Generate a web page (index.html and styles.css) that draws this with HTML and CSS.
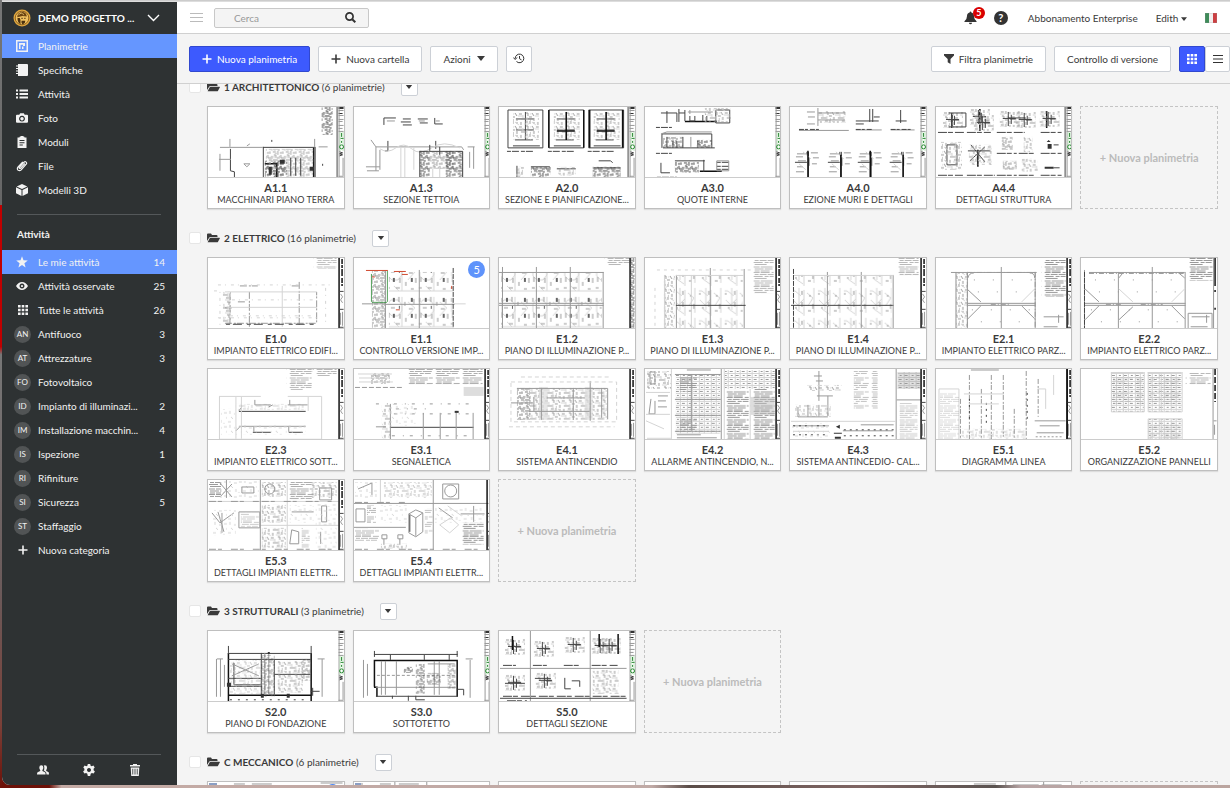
FILE: index.html
```html
<!DOCTYPE html>
<html lang="it">
<head>
    <title>Planimetrie</title>
    <meta charset="utf-8">

    <link rel="stylesheet" href="styles.css">

</head>
<body>

<!-- shared icons and drawing parts -->
<svg class="defs" aria-hidden="true">
    <defs>
        <symbol id="i-plus" viewBox="0 0 10 10"><path d="M5 0.5v9M0.500 5h9" fill="none" stroke="currentColor" stroke-width="1.600"/></symbol>
        <symbol id="i-caret" viewBox="0 0 8 5"><path d="M0 0h8L4 5z"/></symbol>
        <symbol id="i-folder" viewBox="0 0 13 10"><path d="M0 8V1.500Q0 .5 1 .5h3l1 1.500h4.500q1 0 1 1V4H3.500Q2.500 4 2 5zM.6 9.200 2.700 5.300Q3 4.800 3.600 4.800H12.500q.6 0 .3.600L11 8.800q-.3.500-.8.500z"/></symbol>
        <symbol id="i-grid" viewBox="0 0 10 10"><path d="M0 0h2.600v2.600H0zM3.700 0h2.600v2.600H3.700zM7.400 0H10v2.600H7.400zM0 3.700h2.600v2.600H0zM3.700 3.700h2.600v2.600H3.700zM7.400 3.700H10v2.600H7.400zM0 7.400h2.600V10H0zM3.700 7.400h2.600V10H3.700zM7.400 7.400H10V10H7.400z"/></symbol>

        <pattern id="dense" width="13" height="11" patternUnits="userSpaceOnUse">
            <path class="k" d="M0 1h3M5 0v4M7 2h4M1 4h2v3M8 4v3h3M4 7h3M0 9h5M9 9h3M12 5v3M6 9v2M3 2v1"/>
            <path class="g" d="M0 6h4M6 5l3 3M10 0v3M2 8v3M11 10h2"/>
        </pattern>
        <pattern id="mess" width="17" height="13" patternUnits="userSpaceOnUse">
            <path class="g" d="M1 1h3M6 0v3M9 2h2M14 1v3M2 5h2v3M8 5l2 3M12 6h3M5 9h3M0 11h3M10 10v3M14 11h3M6 12h1"/>
            <path class="l" d="M0 3h5M8 1l4 3M3 9v4M11 8h5M6 6h1M16 7v3"/>
        </pattern>
        <pattern id="soft" width="15" height="14" patternUnits="userSpaceOnUse">
            <path class="l" d="M1 2h3M7 0v3M11 3h3M3 7h1M8 6l2 2M13 9v3M5 11h3M1 12v1"/>
        </pattern>
        <pattern id="words" width="27" height="14" patternUnits="userSpaceOnUse">
            <path class="g" d="M1 .5h6m1 0h9m2 0h6M2 2.500h4m1 0h7m1 0h9M1 4.500h9m2 0h4m1 0h6M2 6.500h12M1 9h6m1 0h12m1 0h4M2 11h9m1 0h8M2 13h5m1 0h9"/>
        </pattern>
        <pattern id="table" width="12" height="8" patternUnits="userSpaceOnUse">
            <path class="g" d="M1 2.500h3m4 0h2M2 6.500h2m3 0h3"/><path class="l" d="M0 .5h12M0 4.500h12M6.500 0v8M11.500 0v8"/>
        </pattern>
        <pattern id="lamps" width="32" height="36" patternUnits="userSpaceOnUse">
            <path class="l" d="M5 6h7l4 5v6l-4 5H6l-4-4v-8zM16 3v30M22 8l7 6-7 8M0 33h32M8 28l5 5"/>
            <path class="g" d="M2 4v4M13 3v5M19 8v4M28 5v5M3 19v5M14 20v5M20 24v4M30 20v5M5 14h4M23 15h4M10 30h4M25 31h3M1 30h3"/>
            <path fill="#666" d="M7 4h2v4H7zM25 4h2v4h-2zM7 20h2v4H7zM25 20h2v4h-2zM13 12h1v3h-1z"/>
        </pattern>
        <pattern id="lamps-light" width="26" height="30" patternUnits="userSpaceOnUse">
            <path class="l" d="M2 3h3l6 5M14 2v26M3 12l5 5 6-6M17 5l6 5-5 8M6 21l7 5M24 0v25M9 0v22"/>
            <path class="g" d="M2 6h2M12 3v4M12 14v5M19 8h2M23 16v5M5 20h2M18 23h3"/>
        </pattern>

        <g id="side-green">
            <path class="d" d="M131 0h5v2h-5zM131 6h4v1h-4z"/>
            <path class="g" d="M131 3.500h5M131 8.500h5M131 12.500h5M131 14.500h4M131 18.500h5M131 21.500h4M131 24.500h5M131.500 0v71M135.500 51v18M131 69.500h5"/>
            <path class="e" d="M132.500 25v19M135.500 25v19"/>
            <path class="v" d="M134 26v4M133 31.500h3M134 34v2"/>
            <circle class="v" cx="134" cy="40" r="2"/>
            <path class="k" d="M132 45l3 1-3 1 3 1-3 1"/>
        </g>
        <g id="side-black">
            <path class="kk" d="M131.500 0v71"/>
            <path class="kk" stroke-dasharray="5 1 3 1 7 2" d="M134.500 1v27"/>
            <path class="k" d="M132 33.500h4M132 51.500h4M132 69.500h4"/>
            <path class="g" d="M133 36l2 3-2 3 2 3M135 54v14M133 55v12"/>
        </g>
        <g id="wall">
            <path class="g" d="M3 5h9M2 8h7M4 12h8M3 18h6M2 23h8M17 4h7M19 9h6M18 15h5"/>
            <path class="k" d="M1 13.500h12M14.500 3v27M13 3v3M15 9v8"/><path class="l" d="M9 3l8 7M5 15l7 6"/>
        </g>
        <g id="section">
            <path class="k" d="M1 2h35M1 2v38h35V2M6 38h27M9 11h18M9 22h18M8 32h18M18.500 4v28"/>
            <rect x="6" y="4" width="26" height="28" fill="url(#mess)"/>
            <path class="k" stroke-dasharray="4 1 7 2" d="M0 43.500h26"/>
        </g>
        <g id="detail">
            <rect width="20" height="16" fill="url(#mess)"/>
            <path class="k" d="M8.500 1v14M3 7.500h13M11.500 4v9M10 8h6"/>
        </g>
    </defs>
</svg>

<div class="window">
    <aside class="sidebar">
        <button class="project" type="button">
            <svg class="logo" viewBox="0 0 18 18" aria-hidden="true">
                <circle cx="9" cy="9" r="8.500" fill="#e3a93f"/>
                <circle cx="9" cy="9" r="6.800" fill="#f0c160" stroke="#7a4f14" stroke-width=".8"/>
                <path d="M4.200 8.200Q4.400 3.200 9 3q4.600.2 4.800 4.600L9.500 7z" fill="#6b4310"/>
                <path d="M5.500 6.200Q6.500 4 9 4M9.500 4.200l1.200 2" stroke="#f5d27c" stroke-width=".8" fill="none"/>
                <path d="M4.500 9h2.200l.8 2v4.300Q4.300 13.500 4.500 9zM8.500 11.800h3.800l-.5 2.200-2.300 1.400-1-1.600z" fill="#4a300f"/>
                <path d="M8.300 9.300h1.500M11.200 9.300h1.400" stroke="#4a300f" fill="none"/>
            </svg>
            <span>DEMO PROGETTO ...</span>
            <svg class="chevron" viewBox="0 0 12 8" aria-hidden="true"><path d="M.5 1 6 6.500 11.500 1" fill="none" stroke="currentColor" stroke-width="1.400"/></svg>
        </button>

        <nav class="menu">
            <a class="active" href="#"><svg viewBox="0 0 12 12"><path d="M0 0h12v12H0zM1.500 1.500v9h9v-9z" fill-rule="evenodd"/><path d="M3 3h6v3H7V4.800H4.500V9H3zM6 6.500h1.500V9H6z"/></svg><span>Planimetrie</span></a>
            <a href="#"><svg viewBox="0 0 12 12"><path d="M2 0h9q1 0 1 1v10q0 1-1 1H2zM0 1.500h3v1H0zM0 4h3v1H0zM0 6.500h3v1H0zM0 9h3v1H0z"/></svg><span>Specifiche</span></a>
            <a href="#"><svg viewBox="0 0 12 12"><path d="M0 1.500h2v2H0zM3.500 1.500H12v2H3.500zM0 5h2v2H0zM3.500 5H12v2H3.500zM0 8.500h2v2H0zM3.500 8.500H12v2H3.500z"/></svg><span>Attività</span></a>
            <a href="#"><svg viewBox="0 0 12 12"><path fill-rule="evenodd" d="M1 2.800h2.300L4.200 1.200h3.600l.9 1.600H11q1 0 1 1v6q0 1-1 1H1q-1 0-1-1v-6q0-1 1-1zM6 3.800a2.900 2.900 0 1 0 .01 0zM6 5a1.700 1.700 0 1 1-.01 0z"/></svg><span>Foto</span></a>
            <a href="#"><svg viewBox="0 0 12 12"><path fill-rule="evenodd" d="M1.500 1.500h2V.8h1V0h3v.8h1v.7h2V12h-9zM3.500 4v1h5V4zM3.500 6.200v1h5v-1zM3.500 8.400v1h3.300v-1z"/></svg><span>Moduli</span></a>
            <a href="#"><svg viewBox="0 0 12 12"><path d="M8.800 3.500 4.600 8.300q-.6.500-1.100.1-.5-.5 0-1.100L8 2.200q1.100-1 2.100-.1 1 1 .1 2.100L5.200 9.900q-1.600 1.500-3.200.2-1.300-1.500.1-3.100L6.800 1.800" fill="none" stroke="currentColor" stroke-width="1.200"/></svg><span>File</span></a>
            <a href="#"><svg viewBox="0 0 12 12"><path d="M6 0 11.300 2.400 6 5 .7 2.400zM0 3.300 5.500 6v6L0 9.200zM12 3.300 6.500 6v6L12 9.200z"/></svg><span>Modelli 3D</span></a>
        </nav>

        <h2>Attività</h2>
        <nav class="menu">
            <a class="active" href="#"><svg viewBox="0 0 12 12"><path d="M6 .3 7.500 4.300 11.800 4.500 8.400 7.200 9.600 11.400 6 9 2.400 11.400 3.600 7.200.2 4.500 4.500 4.300z"/></svg><span>Le mie attività</span><em>14</em></a>
            <a href="#"><svg viewBox="0 0 12 12"><path fill-rule="evenodd" d="M0 6q2.500-4 6-4t6 4q-2.500 4-6 4T0 6zM6 3.500a2.500 2.500 0 1 0 .01 0zM6 4.900a1.100 1.100 0 1 1-.01 0z"/></svg><span>Attività osservate</span><em>25</em></a>
            <a href="#"><svg class="small"><use href="#i-grid"/></svg><span>Tutte le attività</span><em>26</em></a>
            <a href="#"><i>AN</i><span>Antifuoco</span><em>3</em></a>
            <a href="#"><i>AT</i><span>Attrezzature</span><em>3</em></a>
            <a href="#"><i>FO</i><span>Fotovoltaico</span></a>
            <a href="#"><i>ID</i><span>Impianto di illuminazi...</span><em>2</em></a>
            <a href="#"><i>IM</i><span>Installazione macchin...</span><em>4</em></a>
            <a href="#"><i>IS</i><span>Ispezione</span><em>1</em></a>
            <a href="#"><i>RI</i><span>Rifiniture</span><em>3</em></a>
            <a href="#"><i>SI</i><span>Sicurezza</span><em>5</em></a>
            <a href="#"><i>ST</i><span>Staffaggio</span></a>
            <a href="#"><svg class="small"><use href="#i-plus"/></svg><span>Nuova categoria</span></a>
        </nav>

        <div class="tools">
            <button type="button" aria-label="Persone"><svg viewBox="0 0 12 12"><path d="M4.300 1.200q2 0 2 2.300 0 1.500-.9 2.500v.9l2.600 1.300q.6.400.6 2.300H0q0-1.900.6-2.300L3.200 6.900V6q-.9-1-.9-2.500 0-2.300 2-2.300zM8 1.200q2 0 2 2.300Q10 5 9.200 6v.9l2.200 1.200q.6.400.6 2.400H9.500q0-2-1-2.800L6.800 6.600Q7.500 5.500 7.300 3.500q0-1.300-.6-2 .6-.3 1.300-.3z"/></svg></button>
            <button type="button" aria-label="Impostazioni"><svg viewBox="0 0 12 12"><path fill-rule="evenodd" d="M4.800 0h2.400l.4 1.700 1.200.6 1.600-.7 1.300 1.900-1.100 1.300v1.400l1.300 1.300-1.300 1.900-1.700-.5-1.200.8L7.200 12H4.800l-.5-2.300-1.200-.8-1.700.5L.1 7.500l1.300-1.300V4.800L.3 3.500l1.300-1.900 1.600.7 1.200-.6zM6 4a2 2 0 1 0 .01 0z"/></svg></button>
            <button type="button" aria-label="Cestino"><svg viewBox="0 0 12 12"><path fill-rule="evenodd" d="M4 0h4v1h3v1.600H1V1h3zM1.700 3.400h8.600L9.800 12H2.200zM3.400 4.800v5.800h.8V4.800zM5.600 4.800v5.800h.8V4.800zM7.800 4.800v5.800h.8V4.800z"/></svg></button>
        </div>
    </aside>

    <div class="main">
        <header class="topbar">
            <button class="burger" type="button" aria-label="Menu"><svg viewBox="0 0 13 9"><path d="M0 .5h13M0 4.500h13M0 8.500h13" stroke="#bbb"/></svg></button>
            <form class="search">
                <input type="search" placeholder="Cerca" aria-label="Cerca">
                <button type="button" aria-label="Avvia ricerca"><svg viewBox="0 0 11 11"><circle cx="4.500" cy="4.500" r="3.600" fill="none" stroke="#333" stroke-width="1.700"/><path d="M7.200 7.200 10.300 10.300" stroke="#333" stroke-width="2"/></svg></button>
            </form>
            <button class="bell" type="button" aria-label="Notifiche"><svg viewBox="0 0 14 14"><path d="M7 0q.9 0 .9 1 2.900.7 2.900 4 0 3.400 2.700 5.500v.8H.5v-.8Q3.200 8.400 3.200 5q0-3.300 2.900-4 0-1 .9-1zM5.300 12h3.400Q8.500 13.700 7 13.700T5.300 12z" fill="#333"/></svg><span class="alert">5</span></button>
            <button class="help" type="button" aria-label="Aiuto">?</button>
            <a class="plan" href="#">Abbonamento Enterprise</a>
            <button class="user" type="button">Edith <svg class="caret"><use href="#i-caret"/></svg></button>
            <svg class="flag" viewBox="0 0 12 10" role="img" aria-label="Italiano"><path d="M0 0h12v10H0z" fill="#f1efee"/><path d="M0 0h4v10H0z" fill="#3f8c5a"/><path d="M8 0h4v10H8z" fill="#cc3f42"/><path d="M0 0h12v10H0z" fill="none" stroke="#999" stroke-opacity=".4"/></svg>
        </header>

        <div class="toolbar">
            <button class="btn primary" type="button"><svg class="plus"><use href="#i-plus"/></svg>Nuova planimetria</button>
            <button class="btn" type="button"><svg class="plus"><use href="#i-plus"/></svg>Nuova cartella</button>
            <button class="btn" type="button">Azioni<svg class="arrow"><use href="#i-caret"/></svg></button>
            <button class="btn square" type="button" aria-label="Cronologia"><svg viewBox="0 0 12 11"><path d="M2.200 5.500a4.300 4.300 0 1 1 1.300 3M.3 4.500l1.900 2L4 4.500M6.500 3v2.700l2 1.200" fill="none" stroke="#333"/></svg></button>
            <span class="push"></span>
            <button class="btn" type="button"><svg class="funnel" viewBox="0 0 10 10"><path d="M0 0h10v1.500L6.500 5v5L3.700 8.300V5L0 1.500z"/></svg>Filtra planimetrie</button>
            <button class="btn" type="button">Controllo di versione</button>
            <div class="switch">
                <button class="btn primary" type="button" aria-label="Griglia"><svg class="grid"><use href="#i-grid"/></svg></button>
                <button class="btn" type="button" aria-label="Elenco"><svg class="grid" viewBox="0 0 10 10"><path d="M0 1.500h10M0 5h10M0 8.500h10" stroke="#333" stroke-width="1.200"/></svg></button>
            </div>
        </div>

        <main class="content">
            <div class="folders">
                <section>
                    <div class="folder">
                        <input type="checkbox" id="f1"><label for="f1"><svg><use href="#i-folder"/></svg><b>1 ARCHITETTONICO</b> (6 planimetrie)</label>
                        <button type="button" aria-label="Opzioni"><svg class="caret"><use href="#i-caret"/></svg></button>
                    </div>
                    <div class="sheets">
                        <a class="sheet" href="#">
                            <svg viewBox="0 0 136 71" preserveAspectRatio="xMaxYMin slice"><rect x="114" width="11" height="28" fill="url(#dense)"/><path class="k" d="M129.500 0v71M55.500 40v31M55 40.500h52M107.500 40v31M22.500 42v22l4 1v6"/><path class="kk" d="M69 56v15M57 57h12M106 41v30"/><path class="g" d="M22 40.500h33M12 40.500h10M12 47v17M11 52.500h12M22 32v8M107 32v8M111 40h9M36 57h6l-3 3zM39 39l3-2"/><rect x="57" y="54" width="22" height="17" fill="url(#dense)"/><rect x="58" y="42" width="48" height="29" fill="url(#dense)" opacity=".5"/><path class="k" d="M83 51v18M88 51v18M93 51v18M64 33v2M115 57v2"/><path class="d" d="M102 60h4v4h-4zM72 53h5v4h-5zM61 60h3v8h-3z"/><use href="#side-green"/></svg>
                            <b>A1.1</b><span>MACCHINARI PIANO TERRA</span>
                        </a>
                        <a class="sheet" href="#">
                            <svg viewBox="0 0 136 71" preserveAspectRatio="xMaxYMin slice"><path class="k" d="M30 11h12M30 11v7M49 12h8M47 15h10M64 12h10M66 16h8M81 11v6h8M49 18h9M34 34v10M82 34v8M34 44h-3"/><path class="g" d="M33 14h8M65 14h6M82 14h4M22 40h86l2 3M22 40v24M26 43v20M12 60h14M13 64h12M17 33l5 7M116 45v16M120 40v22M114 40h7"/><path class="l" d="M26 42q8 5 16-1t16 1 20-1 28 0M47 41v30M51 41v30M60 41v22"/><path class="k" d="M66 44.500h43v26M66 44v27M76 38v6M86 40v8"/><rect x="66" y="44" width="10" height="27" fill="url(#dense)"/><rect x="92" y="44" width="17" height="27" fill="url(#dense)"/><rect x="76" y="45" width="24" height="17" fill="url(#dense)" opacity=".6"/><path class="l" d="M79 62v9M86 60v11"/><use href="#side-green"/></svg>
                            <b>A1.3</b><span>SEZIONE TETTOIA</span>
                        </a>
                        <a class="sheet" href="#">
                            <svg viewBox="0 0 136 71" preserveAspectRatio="xMaxYMin slice"><use href="#section" x="8" y="1"/><use href="#section" x="49" y="1"/><use href="#section" x="89" y="1"/><path class="kk" d="M50 3v38M85 3v38M91 3v38M124 3v38M67.500 5v28M107.500 5v28M58 24h18M98 24h18"/><path class="k" d="M129.500 0v71M100 54h12l2 2M18 59v12M32 60h19M58 62h19M95 61h27"/><rect x="17" y="60" width="8" height="11" fill="url(#mess)"/><rect x="32" y="60" width="20" height="11" fill="url(#dense)"/><rect x="59" y="60" width="18" height="9" fill="url(#mess)"/><rect x="94" y="60" width="28" height="11" fill="url(#dense)"/><use href="#side-green"/></svg>
                            <b>A2.0</b><span>SEZIONE E PIANIFICAZIONE...</span>
                        </a>
                        <a class="sheet" href="#">
                            <svg viewBox="0 0 136 71" preserveAspectRatio="xMaxYMin slice"><path class="kk" d="M40 14.500h32M55 64.500h22"/><path class="k" d="M16 6h16v9M22 4v12M34 2v13M34 6h6M40 3v11M45 9v5h5V9M58 8v6M62 9v5M71 3v13h14V3zM17 27h50v14M17 27v14M18 41h52M22 30v11M38 30v11M28 34v7M32 34v7M53 34v7M16 56v10h9M30 54h30M59 53v12"/><path class="k" stroke-dasharray="4 1 7 1" d="M11 20.500h16M11 46.500h16M12 70.500h20M72 55.500h12M72 59.500h12M72 62.500h12"/><path class="g" d="M43 5h25M45 3v4M16 27l6-2h45M46 30v10M72 54h12v10H72z"/><rect x="60" y="1" width="26" height="14" fill="url(#mess)"/><rect x="18" y="30" width="20" height="11" fill="url(#dense)" opacity=".7"/><rect x="52" y="33" width="15" height="8" fill="url(#dense)"/><rect x="30" y="55" width="24" height="11" fill="url(#dense)"/><use href="#side-green"/></svg>
                            <b>A3.0</b><span>QUOTE INTERNE</span>
                        </a>
                        <a class="sheet" href="#">
                            <svg viewBox="0 0 136 71" preserveAspectRatio="xMaxYMin slice"><rect x="28" y="4" width="28" height="12" fill="url(#mess)"/><path class="g" d="M17 5h8M18 10h7M17 17h8M28 1v18M28 6h27M28 13h27M9 23.500h50M66 23h26M101 23h24"/><path class="k" stroke-dasharray="5 1 3 2" d="M9 22.500h20M66 22.500h16M101 22.500h22"/><path class="k" d="M80 2v13M83 2v13M66 14h23M66 17h8M111 3v13M106 14h11M84 10h6"/><use href="#wall" x="4" y="42"/><use href="#wall" x="37" y="42"/><use href="#wall" x="67" y="42"/><use href="#wall" x="99" y="42"/><path class="kk" d="M18 44v27M51 48v23M80.500 44v27M113.500 48v23"/><use href="#side-green"/></svg>
                            <b>A4.0</b><span>EZIONE MURI E DETTAGLI</span>
                        </a>
                        <a class="sheet" href="#">
                            <svg viewBox="0 0 136 71" preserveAspectRatio="xMaxYMin slice"><path class="k" d="M129.500 0v71"/><path class="kk" d="M16 6v15M44 2v22M42 43v17M111 4v17"/><use href="#detail" x="7" y="5"/><use href="#detail" x="34" y="2"/><use href="#detail" x="38" y="8"/><use href="#detail" x="64" y="4"/><use href="#detail" x="80" y="5"/><use href="#detail" x="104" y="4"/><path class="k" stroke-dasharray="9 1 5 2" d="M2 25.500h27M31 25.500h24M61 25.500h28M105 25.500h21M61 46.500h20M83 46.500h16M105 46.500h21M2 68.500h25M31 68.500h28M61 68.500h20M83 68.500h16M105 68.500h21"/><path class="k" d="M13 6h17v14H13M72 11h18M11 38h10v20H11zM35 38l14 17M49 40 34 54M32 44h22"/><rect x="5" y="35" width="21" height="28" fill="url(#mess)"/><rect x="33" y="38" width="23" height="20" fill="url(#mess)"/><rect x="66" y="30" width="11" height="13" fill="url(#dense)" opacity=".6"/><rect x="88" y="30" width="9" height="15" fill="url(#mess)"/><rect x="67" y="54" width="14" height="9" fill="url(#dense)" opacity=".6"/><rect x="86" y="52" width="16" height="13" fill="url(#mess)"/><path class="d" d="M112 37h4v5h-4zM109 60h9v2h-9zM111 35l2-2 2 2z"/><path class="k" d="M118 38h5M118 61h6"/><use href="#side-green"/></svg>
                            <b>A4.4</b><span>DETTAGLI STRUTTURA</span>
                        </a>
                        <button class="new" type="button">+ Nuova planimetria</button>
                    </div>
                </section>

                <section>
                    <div class="folder">
                        <input type="checkbox" id="f2"><label for="f2"><svg><use href="#i-folder"/></svg><b>2 ELETTRICO</b> (16 planimetrie)</label>
                        <button type="button" aria-label="Opzioni"><svg class="caret"><use href="#i-caret"/></svg></button>
                    </div>
                    <div class="sheets">
                        <a class="sheet" href="#">
                            <svg viewBox="0 0 136 71" preserveAspectRatio="xMaxYMin slice"><rect x="106" y="0" width="23" height="11" fill="url(#words)" opacity=".6"/><path class="g" stroke-dasharray="7 2 2 1" d="M22 66.500V34M17 65.500h92V34M41.500 34v35M91.500 24v45M17 50h7M30 44h8M32 28h18M84 28h8"/><path class="l" d="M17 34h92M74.500 28v41M18 49.500h91"/><path class="k" stroke-dasharray="4 3 9 5" d="M18 66.500h91"/><path class="l" stroke-dasharray="3 4 1 5" d="M10 27h112M6 33h6v34M118 30v36M22 58h84M24 42h84M10 60h100"/><rect x="15" y="34" width="8" height="32" fill="url(#mess)"/><use href="#side-black"/></svg>
                            <b>E1.0</b><span>IMPIANTO ELETTRICO EDIFI...</span>
                        </a>
                        <a class="sheet" href="#">
                            <svg viewBox="0 0 136 71" preserveAspectRatio="xMaxYMin slice"><rect x="35" y="14" width="64" height="57" fill="url(#lamps)"/><rect x="18" y="13" width="14" height="58" fill="url(#dense)" opacity=".6"/><path class="g" d="M31 46.500h70"/><path class="k" stroke-dasharray="5 1" d="M99.500 10v61"/><path class="g" d="M65.500 12v59M31.500 13v58M8 46h24"/><path class="l" d="M100 46h12"/><path class="r" d="M12 12.500h22M40 13.500h12M18 19h3M48 16.500h6M98 28v3M42 52h4"/><path class="v" d="M17.500 16v28M33.500 13v31M18 44.500h15" opacity=".8"/></svg>
                            <b>E1.1</b><span>CONTROLLO VERSIONE IMP...</span>
                            <strong class="badge">5</strong>
                        </a>
                        <a class="sheet" href="#">
                            <svg viewBox="0 0 136 71" preserveAspectRatio="xMaxYMin slice"><rect x="2" y="15" width="101" height="56" fill="url(#lamps)"/><path class="g" d="M0 14.500h105M3.500 9v62M37.500 9v62M71.500 9v62M104.500 14v57M0 45.500h105M0 47.500h105"/><rect x="106" y="0" width="25" height="8" fill="url(#words)" opacity=".7"/><path class="kk" d="M131.500 0v71"/><rect x="132" width="4" height="71" fill="url(#dense)"/></svg>
                            <b>E1.2</b><span>PIANO DI ILLUMINAZIONE P...</span>
                        </a>
                        <a class="sheet" href="#">
                            <svg viewBox="0 0 136 71" preserveAspectRatio="xMaxYMin slice"><rect x="32" y="17" width="66" height="54" fill="url(#lamps-light)"/><rect x="19" y="17" width="11" height="54" fill="url(#mess)"/><path class="g" d="M31.500 17v54M65.500 10v61M99.500 11v60"/><path class="l" d="M46.500 17v54M19.500 17v54M31 17.500h68"/><path class="k" d="M31 47.500h70"/><path class="l" stroke-dasharray="3 4" d="M12 12h95M10 30v40"/><rect x="107" y="1" width="22" height="35" fill="url(#words)" opacity=".7"/><use href="#side-black"/></svg>
                            <b>E1.3</b><span>PIANO DI ILLUMINAZIONE P...</span>
                        </a>
                        <a class="sheet" href="#">
                            <svg viewBox="0 0 136 71" preserveAspectRatio="xMaxYMin slice"><rect x="4" y="17" width="98" height="54" fill="url(#lamps-light)"/><path class="k" stroke-dasharray="5 1" d="M3.500 11v60"/><path class="k" d="M1 47.500h103"/><path class="g" d="M37.500 14v57M71.500 14v57M103.500 17v54"/><path class="l" d="M4 17.500h100"/><rect x="107" y="0" width="22" height="18" fill="url(#words)" opacity=".7"/><use href="#side-black"/></svg>
                            <b>E1.4</b><span>PIANO DI ILLUMINAZIONE P...</span>
                        </a>
                        <a class="sheet" href="#">
                            <svg viewBox="0 0 136 71" preserveAspectRatio="xMaxYMin slice"><rect x="20" y="15" width="11" height="56" fill="url(#mess)"/><path class="g" d="M20 14v57M31.500 14v57M65.500 9v62M99.500 14v57M15 14.500h86M31 45.500h69M31 47.500h69M32 20q1-5 6-5M94 15q5 0 5 5M31 31l14 13M45 48 31 62M86 48l13 13"/><path class="l" d="M86 44l13-13"/><path class="g" stroke-dasharray="5 2 1 2" d="M31 14.500h69M99.500 14v57M31.500 14v57M55 46.500h20"/><path class="g" stroke-dasharray="1 18" d="M38 22h60M42 34h60M36 52h60M45 64h50"/><rect x="106" y="1" width="24" height="38" fill="url(#words)"/><path class="g" d="M108 59h20M123 57v8M108 69h14"/><use href="#side-black"/></svg>
                            <b>E2.1</b><span>IMPIANTO ELETTRICO PARZ...</span>
                        </a>
                        <a class="sheet" href="#">
                            <svg viewBox="0 0 136 71" preserveAspectRatio="xMaxYMin slice"><path class="g" d="M3.500 12v59M37.500 14v57M71.500 9v62M104.500 14v57M3 45.500h102M3 47.500h102M4 31l14 13M18 48 4 62M38 62l14-13M91 48l13 13M38 20l4-5M98 15l6 5M8 14.500h96"/><path class="l" d="M91 44l13-13M52 44 38 31"/><path class="g" stroke-dasharray="5 2 1 2" d="M8 15.500h96M25 46.500h15M60 46.500h22"/><path class="k" stroke-dasharray="5 1" d="M3.500 14v57"/><path class="g" stroke-dasharray="1 18" d="M14 22h86M18 34h80M10 52h90M20 64h80"/><rect x="108" y="0" width="24" height="23" fill="url(#words)"/><path class="g" d="M107.500 71V55.500h24V71M111 59h18M126 57v8M110 69h17"/><path class="kk" d="M134.500 0v28M134.500 32v2M134.500 50v2"/><path class="g" d="M133 0v71"/></svg>
                            <b>E2.2</b><span>IMPIANTO ELETTRICO PARZ...</span>
                        </a>
                        <a class="sheet" href="#">
                            <svg viewBox="0 0 136 71" preserveAspectRatio="xMaxYMin slice"><path class="k" d="M31 42.500h67M45 63.500h18M81 63.500h14"/><path class="g" d="M31 57.500h67M47 36h16M80 36h20M31 42l3-4M47 36v-5M82 36v-5M61 38l4-2M32 58l-4 4M46 58v5M81 58v5"/><path class="l" d="M11 27.500h42M80 27.500h34v43H11.500V28M33.500 28v42M28 28v42M100.500 28v14"/><rect x="13" y="40" width="14" height="26" fill="url(#soft)"/><rect x="28" y="35" width="70" height="6" fill="url(#mess)" opacity=".5"/><rect x="28" y="56" width="70" height="10" fill="url(#soft)"/><rect x="79" y="0" width="25" height="21" fill="url(#words)" opacity=".7"/><rect x="105" y="0" width="24" height="7" fill="url(#words)" opacity=".7"/><use href="#side-black"/></svg>
                            <b>E2.3</b><span>IMPIANTO ELETTRICO SOTT...</span>
                        </a>
                        <a class="sheet" href="#">
                            <svg viewBox="0 0 136 71" preserveAspectRatio="xMaxYMin slice"><rect x="17" y="4" width="19" height="11" fill="url(#dense)" opacity=".6"/><path class="l" d="M4 5h34M5 9h30M5 13h34"/><path class="g" stroke-dasharray="5 2" d="M1 18.500h48"/><rect x="54" y="0" width="75" height="16" fill="url(#words)" opacity=".8"/><rect x="110" y="18" width="20" height="9" fill="#ddd"/><rect x="28" y="36" width="9" height="35" fill="url(#mess)"/><path class="k" d="M36 58.500h84"/><path class="g" d="M36.500 35v36M69.500 44v27M86.500 44v27M102.500 42v29M119.500 44v27M22 58h10"/><path class="g" stroke-dasharray="3 8 1 6" d="M22 35h100M40 45h80M38 67h82M42 40h30"/><path class="d" d="M101 42h4v2h-4z"/><rect x="36" y="35" width="26" height="22" fill="url(#soft)"/><use href="#side-black"/></svg>
                            <b>E3.1</b><span>SEGNALETICA</span>
                        </a>
                        <a class="sheet" href="#">
                            <svg viewBox="0 0 136 71" preserveAspectRatio="xMaxYMin slice"><rect x="18" y="19" width="13" height="32" fill="url(#dense)" opacity=".7"/><rect x="30" y="19" width="78" height="32" fill="url(#mess)"/><rect x="40" y="18" width="9" height="33" fill="#ddd" opacity=".7"/><rect x="86" y="18" width="8" height="33" fill="#ddd" opacity=".7"/><path class="g" d="M18 19.500h91v31M42.500 19v32M74.500 19v32M91.500 12v40M48 29h38M103 19v30"/><path class="g" d="M30 42.500h61M35 28v14M12 34h22"/><path class="l" stroke-dasharray="4 3" d="M12 13h106v40H12zM22 8h88M10 58h106"/><use href="#side-black"/></svg>
                            <b>E4.1</b><span>SISTEMA ANTINCENDIO</span>
                        </a>
                        <a class="sheet" href="#">
                            <svg viewBox="0 0 136 71" preserveAspectRatio="xMaxYMin slice"><rect x="2" y="2" width="25" height="18" fill="url(#mess)"/><path class="g" d="M5 3h5v12H5zM6 30l-2 15h6V32M13 27h10M13 32h8M13 38h9"/><path class="l" d="M1 23.500h24M1 45.500h24M26.500 0v71M1 52l18 8M2 69.500h24"/><rect x="31" y="5" width="44" height="60" fill="url(#table)"/><rect x="35" y="7" width="18" height="16" fill="url(#words)"/><rect x="35" y="49" width="18" height="14" fill="url(#words)"/><path class="g" d="M30 5.500h46M30 30.500h46M30 46.500h46M30 62.500h46M46.500 5v57M76.500 0v71"/><path class="g" d="M42 1h24M32 66h24M32 69h40"/><rect x="80" y="1" width="51" height="19" fill="url(#table)"/><rect x="80" y="21" width="24" height="50" fill="url(#words)"/><rect x="106" y="20" width="24" height="51" fill="url(#words)"/><rect x="106" y="28" width="24" height="18" fill="#bbb" opacity=".5"/><path class="l" d="M79.500 0v71M105.500 20v51"/><use href="#side-black"/></svg>
                            <b>E4.2</b><span>ALLARME ANTINCENDIO, N...</span>
                        </a>
                        <a class="sheet" href="#">
                            <svg viewBox="0 0 136 71" preserveAspectRatio="xMaxYMin slice"><path class="g" d="M29 2v30M24 7h8M26 12h7M27 27h16M38 27v20M8 38v10M18 36v12M29 36v12M8 48h30M106.500 0v71M3 57h36M53 62h50M71 56h33"/><path class="l" d="M1 52.500h105M3 62.500h36"/><path class="k" stroke-dasharray="2 4" d="M3 57h36M3 66h36M54 61h50M54 67h50"/><rect x="17" y="16" width="35" height="6" fill="url(#mess)"/><rect x="5" y="36" width="36" height="12" fill="url(#mess)" opacity=".7"/><rect x="2" y="54" width="38" height="15" fill="url(#soft)"/><path class="d" d="M46 58l4-2v4zM44 64h8v1h-8zM45 68h6v2h-6z"/><rect x="64" y="2" width="24" height="38" fill="url(#words)" opacity=".6"/><rect x="108" y="3" width="23" height="17" fill="url(#table)"/><rect x="108" y="3" width="23" height="17" fill="#999" opacity=".3"/><path class="g" d="M107 31h25"/><rect x="110" y="34" width="18" height="37" fill="url(#words)" opacity=".5"/><use href="#side-black"/></svg>
                            <b>E4.3</b><span>SISTEMA ANTINCEDIO- CAL...</span>
                        </a>
                        <a class="sheet" href="#">
                            <svg viewBox="0 0 136 71" preserveAspectRatio="xMaxYMin slice"><path class="g" stroke-dasharray="5 2 2 1" d="M33.500 6v66M45.500 20v51M55.500 6v66M67.500 6v62M78.500 40v30M90.500 2v70M102.500 10v38M24.500 30v41"/><path class="k" stroke-dasharray="2 4" d="M33.500 30v24M50.500 34v20M91.500 24v30"/><path class="l" d="M3 20h20v51M3 20v51M28 25h40M33 35h30M118 6v20M102 20h8v20"/><rect x="4" y="24" width="19" height="47" fill="url(#words)" opacity=".35"/><rect x="24" y="60" width="66" height="10" fill="url(#mess)" opacity=".6"/><path class="g" d="M99 52h31M101 64h27M104 57h20M35 1h28"/><path class="g" stroke-dasharray="2 2" d="M100 68h26"/><path class="kk" d="M131.500 0v71"/><use href="#side-black"/></svg>
                            <b>E5.1</b><span>DIAGRAMMA LINEA</span>
                        </a>
                        <a class="sheet" href="#">
                            <svg viewBox="0 0 136 71" preserveAspectRatio="xMaxYMin slice"><rect x="30" y="3" width="33" height="40" fill="url(#table)"/><rect x="67" y="3" width="34" height="40" fill="url(#table)"/><rect x="67" y="50" width="34" height="21" fill="url(#table)"/><rect x="32" y="8" width="30" height="28" fill="url(#words)" opacity=".4"/><rect x="69" y="8" width="30" height="28" fill="url(#words)" opacity=".4"/><rect x="69" y="56" width="30" height="15" fill="url(#words)" opacity=".4"/><path class="l" d="M30 3.500h33M30.500 3v40h33V3M67 3.500h34M67.500 3v40h34V3M67.500 71V50h34v21M42.500 3v40M80.500 3v40M80.500 50v21"/><rect x="105" y="3" width="25" height="13" fill="url(#words)" opacity=".7"/><path class="kk" stroke-dasharray="6 2" d="M134.500 0v33"/><path class="g" d="M132.500 0v71M133 52h3M134 56v10"/></svg>
                            <b>E5.2</b><span>ORGANIZZAZIONE PANNELLI</span>
                        </a>
                        <a class="sheet" href="#">
                            <svg viewBox="0 0 136 71" preserveAspectRatio="xMaxYMin slice"><rect x="1" y="1" width="12" height="16" fill="url(#words)"/><rect x="12" y="1" width="39" height="18" fill="url(#soft)"/><rect x="54" y="2" width="24" height="15" fill="url(#mess)"/><rect x="80" y="1" width="26" height="19" fill="url(#words)" opacity=".8"/><rect x="104" y="2" width="25" height="16" fill="url(#mess)"/><path class="l" d="M0 21.500h131M79.500 0v71M52 45.500h79"/><path class="g" d="M52.500 0v71M18.500 0v18M12 3l12 14M24 4 13 16M34 7h12v6H34zM31 32h21v16H31zM10 32l6 20M14 33v20M4 33l8 10 14-10M84 32h22M114 26v16h5V26zM112 8h12v12h-12zM84 50l-2 14h9V52zM113 52v12"/><circle class="g" cx="62" cy="9" r="5"/><rect x="33" y="33" width="18" height="14" fill="url(#words)" opacity=".5"/><rect x="4" y="30" width="24" height="26" fill="url(#soft)"/><rect x="54" y="25" width="24" height="18" fill="url(#mess)"/><rect x="54" y="48" width="24" height="20" fill="url(#mess)"/><rect x="82" y="25" width="24" height="18" fill="url(#soft)"/><rect x="108" y="24" width="21" height="45" fill="url(#soft)"/><rect x="94" y="48" width="8" height="20" fill="url(#words)" opacity=".6"/><path class="g" stroke-dasharray="7 2 4 9" d="M1 21.500h50M1 69.500h128M54 21.500h70"/><use href="#side-black"/></svg>
                            <b>E5.3</b><span>DETTAGLI IMPIANTI ELETTR...</span>
                        </a>
                        <a class="sheet" href="#">
                            <svg viewBox="0 0 136 71" preserveAspectRatio="xMaxYMin slice"><path class="g" d="M0 23.500h135M79.500 0v71M0 47.500h52"/><path class="l" d="M26.500 0v23M86 45l11-7 8 7-9 8zM94 26l14 10"/><path class="g" d="M4 9 18 3v12M89 4h16v15H89zM2 29h9v13H2zM85 28l14 10M107 34h24M120 26v16M28 55v4h5v-4zM44 55v4h5v-4zM30 59v6M46 59v6"/><circle class="g" cx="97" cy="11" r="6"/><path class="g" d="M55 34l7-4 7 3v19l-7 5-7-4zM62 38v18M55 34l7 4 7-5"/><path class="k" d="M56 35v17"/><rect x="1" y="2" width="22" height="17" fill="url(#soft)"/><rect x="30" y="2" width="48" height="16" fill="url(#mess)" opacity=".7"/><rect x="13" y="25" width="9" height="18" fill="url(#words)" opacity=".7"/><rect x="25" y="25" width="28" height="18" fill="url(#soft)"/><rect x="1" y="49" width="26" height="12" fill="url(#words)" opacity=".7"/><rect x="71" y="29" width="8" height="25" fill="url(#words)" opacity=".6"/><rect x="81" y="27" width="50" height="16" fill="url(#soft)"/><rect x="108" y="43" width="22" height="22" fill="url(#words)"/><rect x="27" y="64" width="26" height="5" fill="url(#mess)"/><path class="g" stroke-dasharray="7 2 4 9" d="M1 22.500h50M1 69.500h128"/><use href="#side-black" x="2"/></svg>
                            <b>E5.4</b><span>DETTAGLI IMPIANTI ELETTR...</span>
                        </a>
                        <button class="new" type="button">+ Nuova planimetria</button>
                    </div>
                </section>

                <section>
                    <div class="folder">
                        <input type="checkbox" id="f3"><label for="f3"><svg><use href="#i-folder"/></svg><b>3 STRUTTURALI</b> (3 planimetrie)</label>
                        <button type="button" aria-label="Opzioni"><svg class="caret"><use href="#i-caret"/></svg></button>
                    </div>
                    <div class="sheets">
                        <a class="sheet" href="#">
                            <svg viewBox="0 0 136 71" preserveAspectRatio="xMaxYMin slice"><path class="kk" d="M20.500 22v49M20 64.500h84M103.500 22v49"/><path class="k" d="M20 22.500h84M20.500 15v7M103.500 15v7M20 28.500h83M53.500 22v42M66.500 28v36M20 47.500h33M26 32v22h27M66 43.500h37M20 55.500h34M103 60.500h9M105 57v8"/><path class="g" d="M8.500 28v38M12.500 28v38M16.500 34v22M114.500 28v38M9 28h6M110 28h7M24 33l27 12M51 33 24 45M57 22v42M61 22v42"/><rect x="53" y="24" width="14" height="42" fill="url(#dense)" opacity=".6"/><rect x="22" y="29" width="31" height="34" fill="url(#mess)" opacity=".6"/><rect x="70" y="30" width="25" height="32" fill="url(#mess)"/><rect x="94" y="28" width="9" height="22" fill="url(#dense)" opacity=".6"/><path class="d" d="M19 52h4v4h-4zM60 21h2v2h-2zM53 63h3v4h-3zM79 63h3v4h-3z"/><path class="k" stroke-dasharray="2 6" d="M22 69h80"/><use href="#side-green"/></svg>
                            <b>S2.0</b><span>PIANO DI FONDAZIONE</span>
                        </a>
                        <a class="sheet" href="#">
                            <svg viewBox="0 0 136 71" preserveAspectRatio="xMaxYMin slice"><path class="kk" d="M20.500 56V29.500h83V66M20 56.500h3V66"/><path class="k" d="M20 23.500h84M20.500 20v6M103.500 20v6M36.500 24v5M70.500 24v5M95.500 24v5M62 65v4h9M38.500 65v3M54.500 65v5M104 58.500h6v6M22 65.500h82"/><path class="g" d="M9.500 29v38M13.500 33v32M116.500 29v38M112 28h7M27.500 30v34M31.500 30v34M42.500 30v34M80.500 30v34M85.500 30v34M22 56.500h80M74 33h27"/><path class="g" stroke-dasharray="3 2" d="M23 44.500h80"/><rect x="62" y="33" width="9" height="30" fill="url(#dense)" opacity=".8"/><rect x="50" y="36" width="9" height="6" fill="url(#dense)"/><rect x="73" y="42" width="14" height="12" fill="url(#dense)" opacity=".7"/><rect x="94" y="33" width="8" height="25" fill="url(#dense)" opacity=".6"/><use href="#side-green"/></svg>
                            <b>S3.0</b><span>SOTTOTETTO</span>
                        </a>
                        <a class="sheet" href="#">
                            <svg viewBox="0 0 136 71" preserveAspectRatio="xMaxYMin slice"><path class="g" d="M1 37.500h127M31.500 0v71M91.500 0v71"/><use href="#detail" x="6" y="8"/><use href="#detail" x="35" y="10"/><use href="#detail" x="66" y="6"/><use href="#detail" x="93" y="7"/><use href="#detail" x="102" y="7"/><path class="kk" d="M13.500 5v14M100.500 3v13M119.500 3v20"/><use href="#detail" x="6" y="44"/><use href="#detail" x="37" y="42"/><path class="k" d="M66 47v11h6M73 50h8v6M6 52.500h20M36 47.500h16"/><rect x="94" y="39" width="26" height="24" fill="url(#mess)"/><path class="k" stroke-dasharray="9 1 5 3" d="M4 34.500h13M34 34.500h14M65 34.500h18M93 34.500h26M4 65.500h124M8 70h20"/><path class="k" d="M1 67.500h127"/><use href="#side-green"/></svg>
                            <b>S5.0</b><span>DETTAGLI SEZIONE</span>
                        </a>
                        <button class="new" type="button">+ Nuova planimetria</button>
                    </div>
                </section>

                <section>
                    <div class="folder">
                        <input type="checkbox" id="f4"><label for="f4"><svg><use href="#i-folder"/></svg><b>C MECCANICO</b> (6 planimetrie)</label>
                        <button type="button" aria-label="Opzioni"><svg class="caret"><use href="#i-caret"/></svg></button>
                    </div>
                    <div class="sheets">
                        <a class="sheet" href="#"><svg viewBox="0 0 136 71" preserveAspectRatio="xMaxYMin slice"><path class="g" d="M2 2h7M2 4h9M26 2h11M44 2h20M44 4h25M113 1h22"/><path d="M1 1h8v3H1z" fill="#8b9fc4"/><circle cx="125" cy="8" r="6" fill="#4b86f5"/></svg></a>
                        <a class="sheet" href="#"><svg viewBox="0 0 136 71" preserveAspectRatio="xMaxYMin slice"><path class="g" d="M2 2h7M2 4h9M26 2h11M45 2h20M44 4h25M41 0v71M73 0v71"/><path d="M1 1h6v3H1z" fill="#8b9fc4"/></svg></a>
                        <a class="sheet" href="#"><svg viewBox="0 0 136 71" preserveAspectRatio="xMaxYMin slice"><path class="l" d="M3 71V4h130v67"/></svg></a>
                        <a class="sheet" href="#"><svg viewBox="0 0 136 71" preserveAspectRatio="xMaxYMin slice"><path class="l" d="M2 71V4h130v67"/></svg></a>
                        <a class="sheet" href="#"><svg viewBox="0 0 136 71" preserveAspectRatio="xMaxYMin slice"><path class="l" d="M2 71V4h130v67"/></svg></a>
                        <a class="sheet" href="#"><svg viewBox="0 0 136 71" preserveAspectRatio="xMaxYMin slice"><path class="g" d="M2 4h12M38 2h22M40 4h24M70 0v71M77 3h26M106 3h20M108 0v71"/></svg></a>
                        <button class="new" type="button" aria-label="Nuova planimetria"></button>
                    </div>
                </section>
            </div>
        </main>
    </div>
</div>
</body>
</html>
```
FILE: styles.css
```css
*{
    box-sizing: border-box;
}

html,body{
    height: 100%;
}

body{
    margin: 0;
    padding: 1px 0 3px 2px;
    overflow: hidden;
    font-family: Lato, "Open Sans", sans-serif;
    font-size: 10px;
    line-height: 16px;
    color: #3a3a3a;
    background:
        linear-gradient(#777 0%, #666 26%, #c00000 26%, #c00000 44%, #777 45%, #6b5a5a 75%, #7a4038 92%, #6d1108 100%) left / 2px 100% no-repeat,
        linear-gradient(#ccc, #ccc) top / 100% 1px no-repeat,
        linear-gradient(90deg, #6d1108 0%, #6d1108 4%, #c4aaa4 5%, #c0aaa6 53%, #5b4d48 56%, #806664 70%, #5a5350 81%, #b8a5a5 83%, #bba59f 100%);
}

button{
    font: inherit;
    color: inherit;
    background: none;
    border: 0;
    padding: 0;
    cursor: pointer;
}

a{
    color: inherit;
    text-decoration: none;
}

svg{
    fill: currentColor;
    flex: none;
}

.defs{
    position: absolute;
    width: 0;
    height: 0;
}

.window{
    display: flex;
    height: 100%;
    border-top: 1px solid #ddd;
    border-bottom-left-radius: 8px;
    overflow: hidden;
    background: #f4f4f4;
}

/* sidebar */
.sidebar{
    display: flex;
    flex-direction: column;
    width: 175px;
    flex: none;
    background: #2e3233;
    color: #f2f2f2;
}

.project{
    display: flex;
    align-items: center;
    height: 32px;
    padding: 0 17px 0 11px;
    color: #fff;
    font-weight: bold;
}

.project span{
    flex: 1;
    margin-left: 7px;
    text-align: left;
}

.logo{
    width: 18px;
    height: 18px;
}

.chevron{
    width: 13px;
    height: 8px;
}

.menu a{
    display: flex;
    align-items: center;
    height: 24px;
    padding-right: 12px;
}

.menu svg{
    width: 12px;
    height: 12px;
    margin: 0 10px 0 14px;
}

.menu svg.small{
    width: 10px;
    height: 10px;
    margin: 0 10px 0 16px;
}

.menu i{
    width: 17px;
    height: 17px;
    margin: 0 7px 0 12px;
    border-radius: 50%;
    background: #515455;
    font-size: 8px;
    font-style: normal;
    line-height: 17px;
    text-align: center;
}

.menu span{
    flex: 1;
    white-space: nowrap;
}

.menu em{
    font-style: normal;
}

.menu .active{
    background: #6596ff;
}

.sidebar h2{
    margin: 12px 16px 8px 15px;
    padding-top: 11px;
    border-top: 1px solid #54585a;
    font-size: 10px;
    line-height: 16px;
}

.tools{
    display: flex;
    justify-content: space-between;
    margin: auto 16px 0 15px;
    padding: 9px 20px;
    height: 31px;
    border-top: 1px solid #54585a;
}

.tools svg{
    display: block;
    width: 12px;
    height: 12px;
}

/* top bar */
.main{
    display: flex;
    flex-direction: column;
    flex: 1;
    min-width: 0;
}

.topbar{
    display: flex;
    align-items: center;
    height: 32px;
    flex: none;
    padding: 0 13px;
    background: #fff;
    border-bottom: 1px solid #d0d0d0;
}

.burger svg{
    display: block;
    width: 13px;
    height: 9px;
}

.search{
    display: flex;
    align-items: center;
    width: 155px;
    height: 20px;
    margin: 0 auto 0 11px;
    padding: 0 12px 0 19px;
    background: #f4f4f4;
    border: 1px solid #c8c8c8;
    border-radius: 2px;
}

.search input{
    flex: 1;
    min-width: 0;
    padding: 0;
    border: 0;
    outline: 0;
    background: none;
    font: inherit;
}

.search input::placeholder{
    color: #999;
}

.search svg{
    display: block;
    width: 11px;
    height: 11px;
}

.bell{
    position: relative;
    margin-right: 17px;
}

.bell svg{
    display: block;
    width: 13px;
    height: 14px;
}

.alert{
    position: absolute;
    top: -4px;
    left: 9px;
    width: 12px;
    height: 12px;
    border-radius: 50%;
    background: #d90000;
    color: #fff;
    font-size: 9px;
    font-weight: bold;
    line-height: 12px;
}

.help{
    width: 14px;
    height: 14px;
    border-radius: 50%;
    background: #333;
    color: #fff;
    font-size: 11px;
    font-weight: bold;
    line-height: 14px;
}

.plan{
    margin: 0 18px 0 20px;
}

.user{
    margin-right: 18px;
}

.user .caret{
    width: 6px;
    height: 4px;
    vertical-align: middle;
}

.flag{
    width: 12px;
    height: 10px;
}

/* toolbar */
.toolbar{
    display: flex;
    align-items: center;
    gap: 8px;
    height: 50px;
    flex: none;
    padding-left: 12px;
    border-bottom: 1px solid #d0d0d0;
}

.push{
    flex: 1;
}

.btn{
    display: flex;
    align-items: center;
    justify-content: center;
    height: 26px;
    padding: 0 12px;
    background: #fff;
    border: 1px solid #ccd0d6;
    border-radius: 2px;
    white-space: nowrap;
}

.btn.primary{
    background: #3d5afe;
    border-color: #3148cf;
    color: #fff;
}

.btn.square{
    width: 26px;
    padding: 0;
}

.btn.square svg{
    width: 12px;
    height: 11px;
}

.plus,
.grid,
.funnel{
    width: 10px;
    height: 10px;
}

.plus,
.funnel{
    margin-right: 5px;
}

.arrow{
    width: 8px;
    height: 5px;
    margin-left: 6px;
}

.switch{
    display: flex;
}

.switch .btn{
    width: 26px;
    padding: 0;
}

.switch .btn:last-child{
    width: 25px;
}

/* folders */
.content{
    flex: 1;
    min-height: 0;
    overflow: hidden;
}

.folders{
    margin: -26px 12px 0;
}

.folder{
    display: flex;
    align-items: center;
    height: 48px;
    padding-top: 10px;
}

.folder input{
    appearance: none;
    width: 12px;
    height: 12px;
    margin: 0 6px 0 0;
    background: #fff;
    border: 1px solid #e6e6e6;
    border-radius: 2px;
}

.folder label svg{
    width: 13px;
    height: 10px;
    margin-right: 4px;
    vertical-align: -1px;
}

.folder button{
    display: flex;
    align-items: center;
    justify-content: center;
    width: 17px;
    height: 17px;
    margin-left: 16px;
    background: #fff;
    border: 1px solid #ccd0d6;
    border-radius: 2px;
}

.folder .caret{
    width: 8px;
    height: 4px;
}

.sheets{
    display: grid;
    grid-template-columns: repeat(7, 1fr);
    gap: 8px;
    margin-left: 18px;
}

.sheet,
.new{
    height: 103px;
}

.sheet{
    position: relative;
    display: flex;
    flex-direction: column;
    min-width: 0;
    background: #fff;
    border: 1px solid #bfbfbf;
    box-shadow: 0 1px 1px #ddd;
    text-align: center;
}

.sheet svg{
    width: 100%;
    height: 71px;
    border-bottom: 1px solid #ccc;
    margin-bottom: 3px;
}

.sheet b{
    font-size: 11px;
    line-height: 13px;
}

.sheet span{
    font-size: 9px;
    line-height: 12px;
    white-space: nowrap;
}

.badge{
    position: absolute;
    top: 3px;
    right: 4px;
    width: 17px;
    height: 17px;
    border-radius: 50%;
    background: #5f93fb;
    color: #fff;
    font-size: 11px;
    font-weight: normal;
    line-height: 17px;
}

.new{
    border: 1px dashed #c4c4c4;
    color: #bbb;
    font-size: 11px;
    font-weight: bold;
}

/* drawing strokes */
.k,.kk,.g,.l,.e,.v,.r{
    fill: none;
    stroke-width: 1;
}

.k{
    stroke: #444;
}

.kk{
    stroke: #111;
    stroke-width: 1.5;
}

.g{
    stroke: #999;
}

.l{
    stroke: #d4d4d4;
}

.e{
    stroke: #bde5bd;
}

.v{
    stroke: #2c8a35;
}

.r{
    stroke: #d0492f;
}

.d{
    fill: #333;
}
```
